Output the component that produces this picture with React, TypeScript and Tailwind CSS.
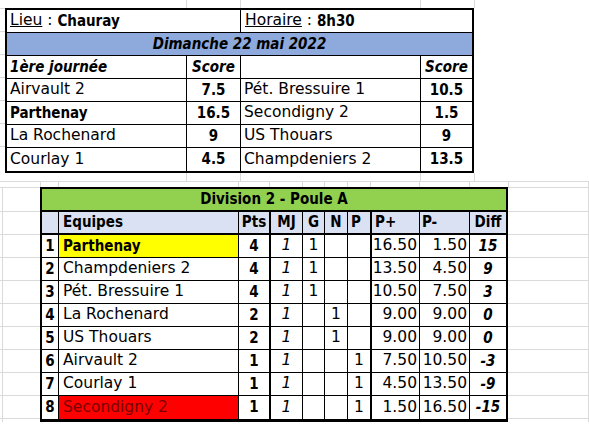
import React from 'react';

const BOLD = "font-bold font-['DejaVu_Sans_Condensed','DejaVu_Sans',sans-serif] font-stretch-condensed text-[15px]";

interface Team {
    rank: number;
    name: string;
    pts: number;
    g?: boolean;
    n?: boolean;
    p?: boolean;
    plus: string;
    minus: string;
    diff: string;
    highlight?: 'yellow' | 'red';
}

const teams: Team[] = [
    { rank: 1, name: 'Parthenay', pts: 4, g: true, plus: '16.50', minus: '1.50', diff: '15', highlight: 'yellow' },
    { rank: 2, name: 'Champdeniers 2', pts: 4, g: true, plus: '13.50', minus: '4.50', diff: '9' },
    { rank: 3, name: 'Pét. Bressuire 1', pts: 4, g: true, plus: '10.50', minus: '7.50', diff: '3' },
    { rank: 4, name: 'La Rochenard', pts: 2, n: true, plus: '9.00', minus: '9.00', diff: '0' },
    { rank: 5, name: 'US Thouars', pts: 2, n: true, plus: '9.00', minus: '9.00', diff: '0' },
    { rank: 6, name: 'Airvault 2', pts: 1, p: true, plus: '7.50', minus: '10.50', diff: '-3' },
    { rank: 7, name: 'Courlay 1', pts: 1, p: true, plus: '4.50', minus: '13.50', diff: '-9' },
    { rank: 8, name: 'Secondigny 2', pts: 1, p: true, plus: '1.50', minus: '16.50', diff: '-15', highlight: 'red' },
];

const matches = [
    { home: 'Airvault 2', hs: '7.5', away: 'Pét. Bressuire 1', as: '10.5' },
    { home: 'Parthenay', hs: '16.5', away: 'Secondigny 2', as: '1.5', homeBold: true },
    { home: 'La Rochenard', hs: '9', away: 'US Thouars', as: '9' },
    { home: 'Courlay 1', hs: '4.5', away: 'Champdeniers 2', as: '13.5' },
];

// stub widths for the sheet gridlines peeking around the tables
const topStubs = ['w-[187px]', 'w-[54px]', 'w-[180px]', 'w-[54px]'];
const bottomStubs = [
    'w-[41px]', 'w-[18px]', 'w-[180px]', 'w-[31px]', 'w-[33px]', 'w-[22px]',
    'w-[23px]', 'w-[23px]', 'w-[49px]', 'w-[50px]', 'w-[39px]', 'w-[80px]',
];

function Stubs({ widths, height }: { widths: string[]; height: string }) {
    return (
        <div className={`flex ${height}`}>
            {widths.map((w, i) => (
                <div key={i} className={`${w} shrink-0 border-r border-[#dadada]`} />
            ))}
        </div>
    );
}

function TopTable() {
    return (
        <div className="w-[469px] border-2 border-black">
            <div className="flex h-[23px] border-b border-black">
                <div className="w-[234px] border-r border-black flex items-center pl-[3px]">
                    <span className="underline">Lieu</span>
                    <span>&nbsp;:&nbsp;</span>
                    <span className={BOLD}>Chauray</span>
                </div>
                <div className="flex-1 flex items-center pl-[4px]">
                    <span className="underline">Horaire</span>
                    <span>&nbsp;:&nbsp;</span>
                    <span className={BOLD}>8h30</span>
                </div>
            </div>
            <div className="flex h-[23px] border-b border-black bg-[#8ea9db] items-center justify-center">
                <span className={`${BOLD} italic`}>Dimanche 22 mai 2022</span>
            </div>
            <div className="flex h-[23px] border-b border-black">
                <div className={`w-[180px] border-r border-black flex items-center pl-[3px] ${BOLD} italic`}>1ère journée</div>
                <div className={`w-[54px] border-r border-black flex items-center justify-center ${BOLD} italic`}>Score</div>
                <div className="w-[180px] border-r border-black" />
                <div className={`flex-1 flex items-center justify-center ${BOLD} italic`}>Score</div>
            </div>
            {matches.map((m, i) => (
                <div
                    key={m.home}
                    className={`flex h-[23px] ${i < matches.length - 1 ? 'border-b border-black' : ''}`}
                >
                    <div className={`w-[180px] border-r border-black flex items-center pl-[3px] ${m.homeBold ? BOLD : ''}`}>
                        {m.home}
                    </div>
                    <div className={`w-[54px] border-r border-black flex items-center justify-center ${BOLD}`}>{m.hs}</div>
                    <div className="w-[180px] border-r border-black flex items-center pl-[3px]">{m.away}</div>
                    <div className={`flex-1 flex items-center justify-center ${BOLD}`}>{m.as}</div>
                </div>
            ))}
        </div>
    );
}

function GutterRows({ className }: { className: string }) {
    return (
        <div className={`flex flex-col shrink-0 ${className}`}>
            <div className="h-[1px] bg-[#dadada]" />
            <div className="h-[24px] border-b border-[#dadada]" />
            <div className="h-[23px] border-b border-[#dadada]" />
            {teams.map((t) => (
                <div key={t.rank} className="h-[23px] border-b border-[#dadada]" />
            ))}
            <div className="flex-1" />
        </div>
    );
}

function Standings() {
    const cell = 'flex items-center h-full';
    return (
        <div className="w-[468px] shrink-0 border-2 border-b-[3px] border-black">
            <div className={`h-[23px] border-b-2 border-black bg-[#92d050] flex items-center justify-center ${BOLD}`}>
                Division 2 - Poule A
            </div>
            <div className={`flex h-[23px] border-b-2 border-black bg-[#d9e1f2] ${BOLD}`}>
                <div className="w-[17px] border-r border-black" />
                <div className={`w-[180px] border-r border-black ${cell} pl-[4px]`}>Equipes</div>
                <div className={`w-[32px] border-r-2 border-black ${cell} justify-center`}>Pts</div>
                <div className={`w-[32px] border-r border-black ${cell} justify-center`}>MJ</div>
                <div className={`w-[22px] border-r border-black ${cell} justify-center`}>G</div>
                <div className={`w-[23px] border-r border-black ${cell} justify-center`}>N</div>
                <div className={`w-[24px] border-r-2 border-black ${cell} pl-[3px]`}>P</div>
                <div className={`w-[48px] border-r border-black ${cell} pl-[3px]`}>P+</div>
                <div className={`w-[50px] border-r border-black ${cell} pl-[2px]`}>P-</div>
                <div className={`flex-1 ${cell} justify-center`}>Diff</div>
            </div>
            {teams.map((t, i) => {
                const nameBg =
                    t.highlight === 'yellow' ? 'bg-[#ffff00]' : t.highlight === 'red' ? 'bg-[#ff0000] text-[#7a0000]' : '';
                return (
                    <div
                        key={t.rank}
                        className={`flex h-[23px] ${i < teams.length - 1 ? 'border-b border-black' : ''}`}
                    >
                        <div className={`w-[17px] border-r border-black ${cell} justify-center ${BOLD}`}>{t.rank}</div>
                        <div
                            className={`w-[180px] border-r border-black ${cell} pl-[4px] ${nameBg} ${t.highlight === 'yellow' ? BOLD : ''}`}
                        >
                            {t.name}
                        </div>
                        <div className={`w-[32px] border-r-2 border-black ${cell} justify-center ${BOLD}`}>{t.pts}</div>
                        <div className={`w-[32px] border-r border-black ${cell} justify-center italic`}>1</div>
                        <div className={`w-[22px] border-r border-black ${cell} justify-center`}>{t.g ? '1' : ''}</div>
                        <div className={`w-[23px] border-r border-black ${cell} justify-center`}>{t.n ? '1' : ''}</div>
                        <div className={`w-[24px] border-r-2 border-black ${cell} justify-center`}>{t.p ? '1' : ''}</div>
                        <div className={`w-[48px] border-r border-black ${cell} justify-end pr-[2px]`}>{t.plus}</div>
                        <div className={`w-[50px] border-r border-black ${cell} justify-end pr-[2px]`}>{t.minus}</div>
                        <div className={`flex-1 ${cell} justify-center ${BOLD} italic`}>{t.diff}</div>
                    </div>
                );
            })}
        </div>
    );
}

export default function App() {
    return (
        <div className="w-[589px] h-[426px] overflow-hidden bg-white text-black text-[15.5px] leading-none font-['DejaVu_Sans',sans-serif]">
            <Stubs widths={topStubs} height="h-[8px]" />
            <div className="flex">
                <div className="w-[5px] shrink-0 flex flex-col">
                    {Array.from({ length: 7 }).map((_, i) => (
                        <div key={i} className="h-[23px] border-t border-[#dadada]" />
                    ))}
                </div>
                <TopTable />
            </div>
            <Stubs widths={topStubs} height="h-[8px]" />
            <div className="h-[1px] bg-[#dadada]" />
            <Stubs widths={bottomStubs} height="h-[5px]" />
            <div className="flex">
                <GutterRows className="w-[40px] bg-[linear-gradient(to_right,transparent_2px,#dadada_2px,#dadada_3px,transparent_3px)]" />
                <Standings />
                <GutterRows className="w-[81px] border-r border-[#dadada]" />
            </div>
        </div>
    );
}
